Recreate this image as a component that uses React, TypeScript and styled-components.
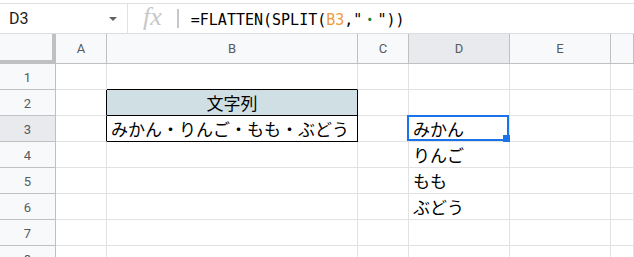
import React from "react";
import styled, { createGlobalStyle } from "styled-components";

const Global = createGlobalStyle`
  html, body { margin: 0; padding: 0; background: #fff; overflow: hidden; }
  #root { width: 634px; height: 257px; }
`;

const Page = styled.div`
  width: 634px;
  height: 257px;
  overflow: hidden;
  padding-top: 3px;
  box-sizing: border-box;
  display: flex;
  flex-direction: column;
  background: #fff;
`;

const FormulaBar = styled.div`
  display: flex;
  align-items: center;
  height: 31px;
  flex: none;
  box-sizing: border-box;
  border-top: 1px solid #e1e1e1;
  border-bottom: 1px solid #dadce0;
`;

const NameBox = styled.div`
  width: 128px;
  height: 100%;
  box-sizing: border-box;
  display: flex;
  align-items: center;
  justify-content: space-between;
  padding: 0 10px 0 9px;
  border-right: 1px solid #e1e1e1;
  font-family: Roboto, "Liberation Sans", sans-serif;
  font-size: 16px;
  color: #202124;
`;

const Caret = styled.span`
  width: 0;
  height: 0;
  border-left: 4px solid transparent;
  border-right: 4px solid transparent;
  border-top: 4px solid #5f6368;
  margin-top: 1px;
`;

const Fx = styled.span`
  margin-left: 15px;
  font-family: "Liberation Serif", serif;
  font-style: italic;
  font-size: 26px;
  color: #c6c8ca;
  line-height: 1;
  margin-top: -3px;
`;

const Bar = styled.span`
  margin-left: 15px;
  width: 2px;
  height: 19px;
  background: #c7c7c7;
`;

const Formula = styled.div`
  margin-left: 12px;
  font-family: "DejaVu Sans Mono", "Noto Sans CJK JP", monospace;
  font-size: 15px;
  color: #000;
  white-space: pre;
`;

const Tok = styled.span<{ $c: string }>`
  color: ${(p) => p.$c};
`;

const Grid = styled.div`
  display: grid;
  grid-template-columns: 56px 51px 251px 51px 101px 101px 1fr;
  grid-template-rows: 30px repeat(8, 26px);
  flex: none;
`;

const Corner = styled.div`
  box-sizing: border-box;
  background: #f8f9fa;
  border-right: 4px solid #c0c0c0;
  border-bottom: 4px solid #c0c0c0;
`;

const ColHead = styled.div<{ $active?: boolean }>`
  box-sizing: border-box;
  background: ${(p) => (p.$active ? "#e8eaed" : "#f8f9fa")};
  border-right: 1px solid #c0c0c0;
  border-bottom: 1px solid #c0c0c0;
  display: flex;
  align-items: center;
  justify-content: center;
  font-family: Roboto, "Liberation Sans", sans-serif;
  font-size: 13px;
  color: #575a5e;
`;

const RowHead = styled(ColHead)`
  padding-top: 1px;
`;

const Cell = styled.div<{
  $bg?: string;
  $rb?: boolean;
  $bb?: boolean;
  $center?: boolean;
}>`
  position: relative;
  box-sizing: border-box;
  background: ${(p) => p.$bg || "#fff"};
  border-right: 1px solid ${(p) => (p.$rb ? "#000" : "#e2e2e2")};
  border-bottom: 1px solid ${(p) => (p.$bb ? "#000" : "#e2e2e2")};
  display: flex;
  align-items: center;
  justify-content: ${(p) => (p.$center ? "center" : "flex-start")};
  padding: 0 4px;
  font-family: "Noto Sans CJK JP", sans-serif;
  font-size: 17px;
  color: #000;
  white-space: nowrap;
`;

const Selection = styled.div`
  position: absolute;
  top: -1px;
  left: -2px;
  right: 0;
  bottom: 0;
  border: 2px solid #1a73e8;
  pointer-events: none;
`;

const Handle = styled.div`
  position: absolute;
  right: -3px;
  bottom: -3px;
  width: 7px;
  height: 7px;
  background: #1a73e8;
`;

type CellDef = {
  text?: string;
  bg?: string;
  rb?: boolean;
  bb?: boolean;
  center?: boolean;
  sel?: boolean;
};

const cols = ["A", "B", "C", "D", "E", ""];

const rows: Record<number, CellDef[]> = {
  1: [{}, { bb: true }, {}, {}, {}, {}],
  2: [{ rb: true }, { text: "文字列", bg: "#d0dfe3", rb: true, bb: true, center: true }, {}, {}, {}, {}],
  3: [{ rb: true }, { text: "みかん・りんご・もも・ぶどう", rb: true, bb: true }, {}, { text: "みかん", sel: true }, {}, {}],
  4: [{}, {}, {}, { text: "りんご" }, {}, {}],
  5: [{}, {}, {}, { text: "もも" }, {}, {}],
  6: [{}, {}, {}, { text: "ぶどう" }, {}, {}],
  7: [{}, {}, {}, {}, {}, {}],
  8: [{}, {}, {}, {}, {}, {}],
};

export default function App() {
  return (
    <>
      <Global />
      <Page>
        <FormulaBar>
          <NameBox>
            <span>D3</span>
            <Caret />
          </NameBox>
          <Fx>fx</Fx>
          <Bar />
          <Formula>
            =FLATTEN(SPLIT(<Tok $c="#f09a3e">B3</Tok>,"<Tok $c="#188038">・</Tok>"))
          </Formula>
        </FormulaBar>
        <Grid>
          <Corner />
          {cols.map((c, i) => (
            <ColHead key={i} $active={c === "D"}>
              {c}
            </ColHead>
          ))}
          {Object.keys(rows).map((k) => {
            const n = Number(k);
            return (
              <React.Fragment key={n}>
                <RowHead $active={n === 3}>{n}</RowHead>
                {rows[n].map((d, i) => (
                  <Cell key={i} $bg={d.bg} $rb={d.rb} $bb={d.bb} $center={d.center}>
                    {d.text}
                    {d.sel && (
                      <Selection>
                        <Handle />
                      </Selection>
                    )}
                  </Cell>
                ))}
              </React.Fragment>
            );
          })}
        </Grid>
      </Page>
    </>
  );
}
